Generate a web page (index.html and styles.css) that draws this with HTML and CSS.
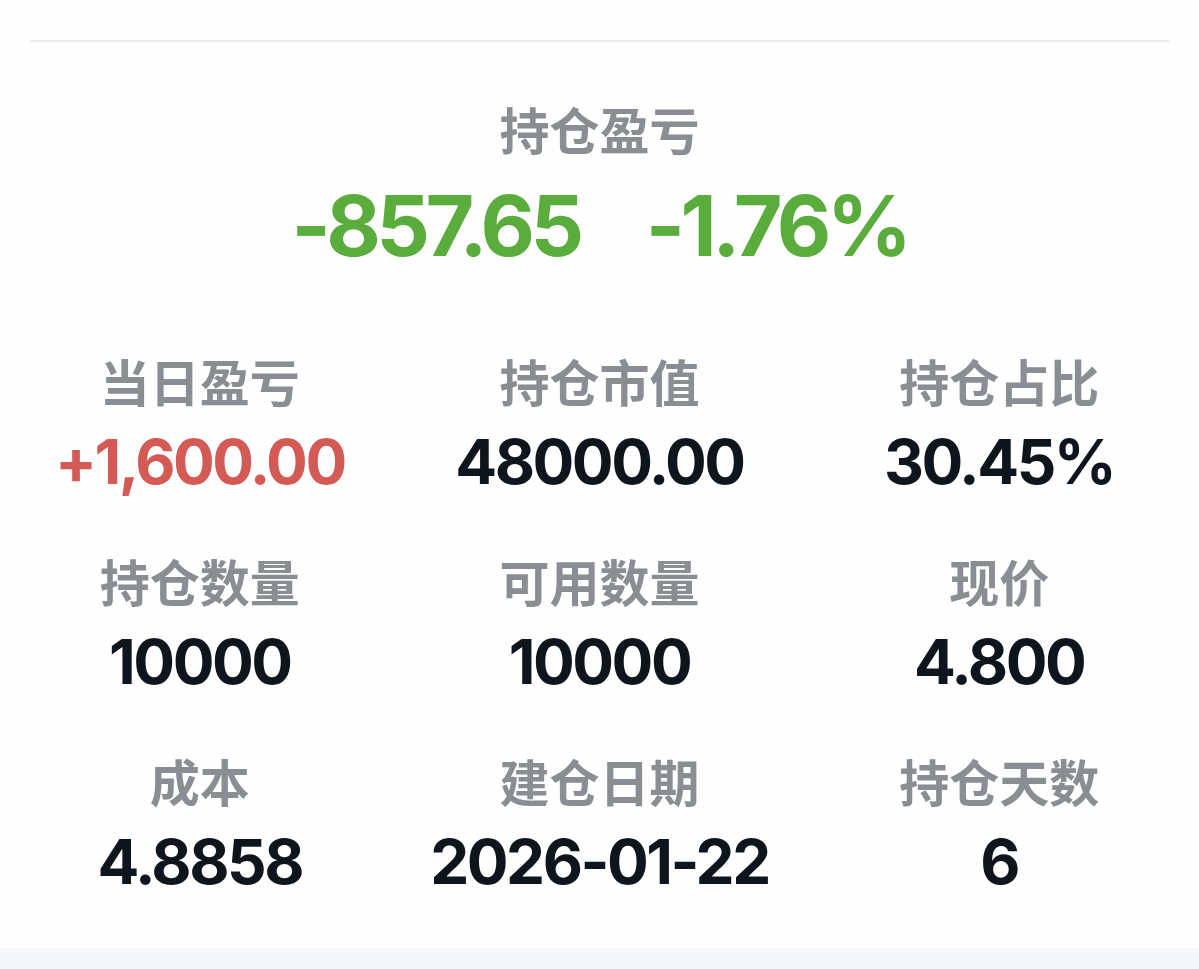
FILE: index.html
```html
<!DOCTYPE html>
<html lang="zh-CN">
<head>
<meta charset="utf-8">
<title>持仓盈亏</title>
<link rel="stylesheet" href="styles.css">
</head>
<body>
<div class="page">
  <div class="divider"></div>
  <section class="summary">
    <div class="summary-title">持仓盈亏</div>
    <div class="summary-values">
      <span class="green">-857.65</span>
      <span class="green">-1.76%</span>
    </div>
  </section>
  <section class="grid">
    <div class="cell"><div class="label">当日盈亏</div><div class="value red">+1,600.00</div></div>
    <div class="cell"><div class="label">持仓市值</div><div class="value">48000.00</div></div>
    <div class="cell"><div class="label">持仓占比</div><div class="value">30.45%</div></div>
    <div class="cell"><div class="label">持仓数量</div><div class="value">10000</div></div>
    <div class="cell"><div class="label">可用数量</div><div class="value">10000</div></div>
    <div class="cell"><div class="label">现价</div><div class="value">4.800</div></div>
    <div class="cell"><div class="label">成本</div><div class="value">4.8858</div></div>
    <div class="cell"><div class="label">建仓日期</div><div class="value">2026-01-22</div></div>
    <div class="cell"><div class="label">持仓天数</div><div class="value">6</div></div>
  </section>
  <div class="bottom-band"></div>
</div>
</body>
</html>
```

FILE: styles.css
```css
html, body {
  margin: 0;
  padding: 0;
  background: #fefefe;
}
body {
  font-family: Inter, "Noto Sans CJK SC", sans-serif;
  width: 1199px;
  height: 969px;
  overflow: hidden;
}
.page {
  display: flex;
  flex-direction: column;
  height: 969px;
}
.divider {
  margin: 40px 30px 0;
  height: 2px;
  background: #ebebeb;
}
.summary {
  display: flex;
  flex-direction: column;
  align-items: center;
  padding-top: 56px;
}
.summary-title {
  font-family: "Noto Sans CJK SC", sans-serif;
  font-size: 50px;
  line-height: 60px;
  font-weight: 700;
  color: #8a8e92;
}
.summary-values {
  margin-top: 18px;
  display: flex;
  gap: 66px;
  font-size: 84px;
  line-height: 100px;
  font-weight: 650;
  letter-spacing: -4.5px;
}
.green { color: #5aac3d; }
.grid {
  margin-top: 74px;
  display: grid;
  grid-template-columns: repeat(3, 1fr);
  row-gap: 48px;
}
.cell {
  display: flex;
  flex-direction: column;
  align-items: center;
  gap: 12px;
}
.label {
  font-family: "Noto Sans CJK SC", sans-serif;
  font-size: 50px;
  line-height: 60px;
  font-weight: 700;
  color: #8a8e92;
}
.value {
  font-size: 62px;
  line-height: 80px;
  font-weight: 650;
  letter-spacing: -2.5px;
  color: #0e151c;
}
.value.red { color: #d45a55; }
.bottom-band {
  margin-top: auto;
  height: 21px;
  background: #f6f7f9;
}
```
